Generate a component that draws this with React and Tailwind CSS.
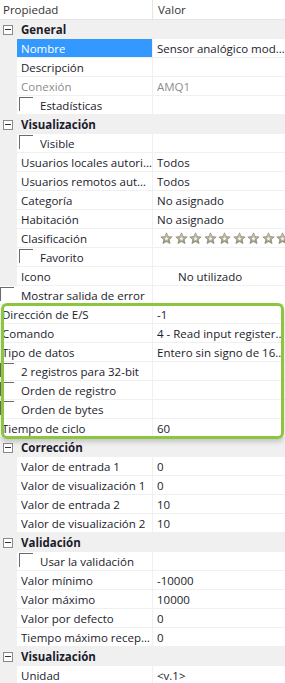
const font = { fontFamily: '"Open Sans", "Noto Sans", sans-serif' };

function Minus() {
  return (
    <span className="ml-[3px] mr-[8px] flex h-[10px] w-[10px] shrink-0 items-center justify-center border border-[#8a8a8a] bg-white">
      <span className="h-px w-[6px] bg-[#333]" />
    </span>
  );
}

function Check({ className = '' }) {
  return <span className={`h-[14px] w-[14px] shrink-0 border-l border-t border-[#6b6b6b] bg-white ${className}`} />;
}

function Group({ title }) {
  return (
    <div className="flex h-[19px] items-center bg-[#f0f0f0] font-bold text-[#1b1b2b]">
      <Minus />
      <span className="leading-[17px]">{title}</span>
    </div>
  );
}

function Row({ label, value, check, selected, muted, indent = true, valueClass = '' }) {
  return (
    <div className="flex h-[19px]">
      {indent && <div className="w-[17px] shrink-0 bg-[#f0f0f0]" />}
      <div
        className={`flex w-0 flex-1 items-center border-b border-r border-[#f0f0f0] ${
          selected ? 'bg-[#3399ff] text-white' : muted ? 'bg-white text-[#8d8d8d]' : 'bg-white text-[#1b1b2b]'
        } ${indent ? 'pl-[4px]' : 'pl-[2px]'}`}
      >
        {check && <Check className="mr-[7px] -ml-[2px] mt-[1px] self-start" />}
        <span className="truncate leading-[17px]">{label}</span>
      </div>
      <div
        className={`flex w-[132px] shrink-0 items-center border-b border-[#f0f0f0] bg-white pl-[4px] ${
          muted ? 'text-[#8d8d8d]' : 'text-[#1b1b2b]'
        } ${valueClass}`}
      >
        <span className="truncate leading-[17px]">{value}</span>
      </div>
    </div>
  );
}

function Star() {
  return (
    <svg width="13" height="13" viewBox="0 0 24 24" className="shrink-0">
      <defs>
        <linearGradient id="sg" x1="0" y1="0" x2="0" y2="1">
          <stop offset="0" stopColor="#d8d4c8" />
          <stop offset="1" stopColor="#8c8570" />
        </linearGradient>
      </defs>
      <path
        d="M12 1.5l3.1 6.8 7.4.8-5.5 5 1.6 7.3L12 17.7l-6.6 3.7L7 14.1l-5.5-5 7.4-.8z"
        fill="url(#sg)"
        stroke="#8a836c"
        strokeWidth="1.2"
      />
      <path d="M12 8.5l1.2 2.6 2.8.3-2.1 1.9.6 2.8L12 14.7l-2.5 1.4.6-2.8-2.1-1.9 2.8-.3z" fill="#f4f2ec" />
    </svg>
  );
}

export default function App() {
  return (
    <div className="h-[683px] w-[285px] overflow-hidden bg-white text-[11.5px] leading-none" style={font}>
      <div className="flex h-[20px] border-b border-[#e5e5e5] bg-white text-[#333]">
        <div className="flex w-[153px] items-center border-r border-[#e5e5e5] pl-[3px]">Propiedad</div>
        <div className="flex flex-1 items-center pl-[5px]">Valor</div>
      </div>

      <Group title="General" />
      <Row label="Nombre" value="Sensor analógico modbus" selected />
      <Row label="Descripción" value="" />
      <Row label="Conexión" value="AMQ1" muted />
      <Row label="Estadísticas" value="" check />

      <Group title="Visualización" />
      <Row label="Visible" value="" check />
      <Row label="Usuarios locales autorizados" value="Todos" />
      <Row label="Usuarios remotos autorizados" value="Todos" />
      <Row label="Categoría" value="No asignado" />
      <Row label="Habitación" value="No asignado" />
      <div className="flex h-[19px]">
        <div className="w-[17px] shrink-0 bg-[#f0f0f0]" />
        <div className="flex w-0 flex-1 items-center border-b border-r border-[#f0f0f0] bg-white pl-[4px] text-[#1b1b2b]">
          <span className="leading-[17px]">Clasificación</span>
        </div>
        <div className="flex w-[132px] shrink-0 items-center gap-[1.5px] overflow-hidden border-b border-[#f0f0f0] bg-white pl-[7px]">
          {Array.from({ length: 10 }).map((_, i) => (
            <Star key={i} />
          ))}
        </div>
      </div>
      <Row label="Favorito" value="" check />
      <Row label="Icono" value="No utilizado" valueClass="pl-[25px]" />
      <Row label="Mostrar salida de error" value="" check indent={false} />

      <div className="relative">
        <Row label="Dirección de E/S" value="-1" indent={false} />
        <Row label="Comando" value="4 - Read input registers (3x)" indent={false} />
        <Row label="Tipo de datos" value="Entero sin signo de 16 bits" indent={false} />
        <Row label="2 registros para 32-bit" value="" check indent={false} />
        <Row label="Orden de registro" value="" check indent={false} />
        <Row label="Orden de bytes" value="" check indent={false} />
        <Row label="Tiempo de ciclo" value="60" indent={false} />
        <div className="pointer-events-none absolute -top-[2px] left-[1px] right-[1px] -bottom-[1px] rounded-[6px] border-[3px] border-[#8cc63f] shadow-[0_3px_5px_rgba(0,0,0,0.18)]" />
      </div>

      <Group title="Corrección" />
      <Row label="Valor de entrada 1" value="0" />
      <Row label="Valor de visualización 1" value="0" />
      <Row label="Valor de entrada 2" value="10" />
      <Row label="Valor de visualización 2" value="10" />

      <Group title="Validación" />
      <Row label="Usar la validación" value="" check />
      <Row label="Valor mínimo" value="-10000" />
      <Row label="Valor máximo" value="10000" />
      <Row label="Valor por defecto" value="0" />
      <Row label="Tiempo máximo recepción" value="0" />

      <Group title="Visualización" />
      <Row label="Unidad" value="<v.1>" />
    </div>
  );
}
